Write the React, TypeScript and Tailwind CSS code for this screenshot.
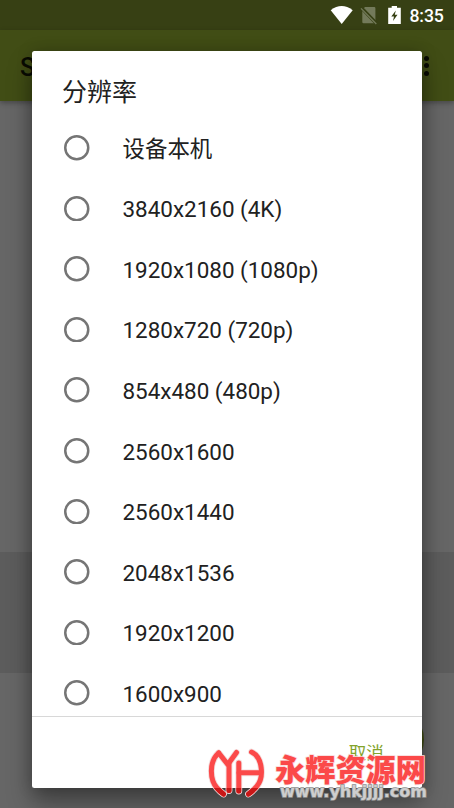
const resolutions = [
  '设备本机',
  '3840x2160 (4K)',
  '1920x1080 (1080p)',
  '1280x720 (720p)',
  '854x480 (480p)',
  '2560x1600',
  '2560x1440',
  '2048x1536',
  '1920x1200',
  '1600x900',
];

function StatusBar() {
  return (
    <div className="flex h-[30px] shrink-0 items-center justify-end bg-[#374014] text-white">
      <svg className="h-[30px] w-[150px]" viewBox="304 0 150 30">
        <path d="M341.700 24 L330.700 10.200 Q336.200 6 341.700 6 Q347.200 6 352.700 10.200 Z" fill="#fff" />
        <path d="M361.800 10.300 L365 7 H374.300 Q375.400 7 375.400 8.200 V22 L374 23.200 H363.500 Q362.300 23.200 362.300 22 V11 Z" fill="#737a5a" />
        <path d="M361 7.400 L376.700 23.800" stroke="#374014" strokeWidth="3.400" />
        <path d="M361 8.400 L376.300 24" stroke="#737a5a" strokeWidth="1.300" />
        <path d="M391.700 6 H397 V7.800 H400.800 V24 H388.200 V7.800 H391.700 Z" fill="#fff" />
        <path d="M395.800 10.500 L391.300 16.500 H394 L393 21 L397.500 14.700 H394.800 Z" fill="#374014" />
        <text x="409.400" y="22.200" fill="#fff" fontFamily="Roboto, sans-serif" fontSize="17.700" fontWeight="500" textLength="34.500">8:35</text>
      </svg>
    </div>
  );
}

function Watermark() {
  return (
    <svg className="absolute left-[200px] top-[740px] h-[68px] w-[254px]" viewBox="200 740 254 68">
      <defs>
        <clipPath id="below-dialog">
          <rect x="200" y="788" width="222" height="20" />
        </clipPath>
        <g id="yh-mark" fill="none" strokeLinecap="round" strokeLinejoin="round">
          <path d="M218.500 753 C208.500 762 210 780 217 788 Q220 791.500 223.500 794" />
          <path d="M218.800 753 L227.800 764.500 L236.500 752.500" />
          <path d="M229 764 V790.500" />
          <path d="M238.800 763 V791" />
          <path d="M239 772.800 H259" />
          <path d="M251.500 752 C263 757 264 778 257 786 Q253.500 790.500 248.500 794" />
        </g>
      </defs>
      <use href="#yh-mark" stroke="#f3dddd" strokeWidth="6.800" />
      <use href="#yh-mark" stroke="#fb4949" strokeWidth="5" />
      <use href="#yh-mark" stroke="#c91717" strokeWidth="5" clipPath="url(#below-dialog)" />
      <text
        x="275"
        y="780.800"
        fill="#fb4949"
        stroke="#f8dcdc"
        strokeWidth="1.500"
        paintOrder="stroke"
        fontFamily="'Noto Sans CJK SC', sans-serif"
        fontSize="31"
        fontWeight="900"
        textLength="151"
        lengthAdjust="spacingAndGlyphs"
      >
        永辉资源网
      </text>
      <text
        x="280"
        y="797"
        fill="#cecece"
        stroke="#929292"
        strokeWidth="1.500"
        paintOrder="stroke"
        fontFamily="'DejaVu Sans', sans-serif"
        fontSize="15.500"
        fontWeight="700"
        textLength="147"
        lengthAdjust="spacingAndGlyphs"
      >
        www.yhkjjjj.com
      </text>
    </svg>
  );
}

export default function App() {
  return (
    <div className="relative flex h-[808px] w-[454px] flex-col overflow-hidden bg-[#666666] font-[Roboto,'Noto_Sans_CJK_SC',sans-serif]">
      <StatusBar />
      <header className="flex h-[71px] shrink-0 items-center justify-between bg-[#414d15] pr-[25.500px] pl-5 shadow-[0_2px_5px_rgba(0,0,0,0.3)]">
        <span className="pt-[4px] text-[25px] font-medium text-[#090b03]">S</span>
        <span className="flex flex-col gap-[2.500px]">
          <i className="size-[5px] rounded-full bg-[#090b03]" />
          <i className="size-[5px] rounded-full bg-[#090b03]" />
          <i className="size-[5px] rounded-full bg-[#090b03]" />
        </span>
      </header>
      <div className="mt-[451px] h-[121px] shrink-0 bg-[#5c5c5c]" />
      <div className="absolute top-[704px] left-[353px] size-[71px] rounded-full bg-[#414d15]" />

      <section className="absolute top-[50.500px] left-[31.500px] flex h-[737.500px] w-[390.800px] flex-col overflow-hidden rounded-[2.500px] bg-white text-[#212121] shadow-[0_15px_24px_rgba(0,0,0,0.36),0_0_16px_rgba(0,0,0,0.2)]">
        <h1 className="mt-[24px] pl-[30.500px] text-[25px] leading-[36px] font-normal">分辨率</h1>
        <ul className="mt-[7px] h-[598px] shrink-0 overflow-hidden">
          {resolutions.map((label) => (
            <li key={label} className="flex h-[60.600px] items-center pl-[32.500px]">
              <svg className="size-[25.500px] shrink-0" viewBox="0 0 25.5 25.5">
                <circle cx="12.750" cy="12.750" r="11.500" fill="none" stroke="#757575" strokeWidth="2.500" />
              </svg>
              <span className="ml-[33px] pt-[1.700px] text-[22.450px] leading-[30px] whitespace-nowrap">{label}</span>
            </li>
          ))}
        </ul>
        <footer className="flex flex-1 justify-end border-t border-[#d8d8d8] pt-[24px] pr-[38.500px]">
          <button className="h-[24px] text-[17.500px] leading-[24px] text-[#83a32c]">取消</button>
        </footer>
      </section>
      <Watermark />
    </div>
  );
}
